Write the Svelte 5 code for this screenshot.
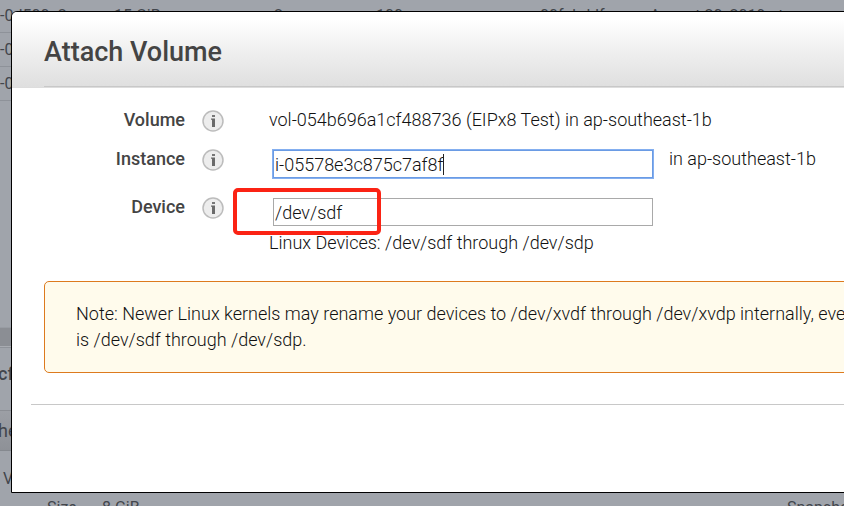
<script>
  const volume = "vol-054b696a1cf488736 (EIPx8 Test) in ap-southeast-1b";
  const zone = "in ap-southeast-1b";

  let instance = "i-05578e3c875c7af8f";
  let device = "/dev/sdf";

  const rowIds = ["-0", "-0", "-0"];
  const columns = ["-0d500c2a", "15 GiB", "gp2", "100", "", "00fabdJf", "August 20, 2019 at"];
</script>

{#snippet info(label)}
  <button class="info" type="button" aria-label={label}>
    <svg viewBox="0 0 22 22" width="22" height="22" aria-hidden="true">
      <circle cx="11" cy="11" r="10" fill="#ededed" stroke="#bcbcbc" stroke-width="1.5" />
      <rect x="10" y="5" width="3" height="2" fill="#777" />
      <path d="M9 8.5h4V17h-3V9.7H9z" fill="#6a6a6a" />
    </svg>
  </button>
{/snippet}

<main class="page">
  <div class="volumes">
    {#each rowIds as id, i}
      <div class="volume-row">
        {#if i === 0}
          {#each columns as value}<span>{value}</span>{/each}
        {:else}
          <span>{id}</span>
        {/if}
      </div>
    {/each}
  </div>
  <div class="details">
    <div class="splitter"></div>
    <div class="details-title">cf</div>
    <div class="tabs">he</div>
    <div class="detail-name">V</div>
    <div class="detail-row">
      <span>Size</span>
      <span>8 GiB</span>
      <span>Snapshot</span>
    </div>
  </div>

  <div class="dialog" role="dialog" aria-labelledby="title">
    <header>
      <h1 id="title">Attach Volume</h1>
    </header>

    <form class="fields">
      <span class="label">Volume</span>
      {@render info("About volume")}
      <div class="value">{volume}</div>

      <label class="label" for="instance">Instance</label>
      {@render info("About instance")}
      <div class="value instance">
        <div class="control">
          <input id="instance" class="focused" type="text" bind:value={instance} />
          <span class="caret"></span>
        </div>
        <span>{zone}</span>
      </div>

      <label class="label" for="device">Device</label>
      {@render info("About device")}
      <div class="value">
        <div class="control">
          <input id="device" type="text" bind:value={device} />
          <span class="highlight"></span>
        </div>
        <div>Linux Devices: /dev/sdf through /dev/sdp</div>
      </div>
    </form>

    <p class="note">
      Note: Newer Linux kernels may rename your devices to /dev/xvdf through /dev/xvdp internally, even<br />
      is /dev/sdf through /dev/sdp.
    </p>
    <hr />
  </div>
</main>

<style>
  :global(body) {
    margin: 0;
  }

  .page {
    position: relative;
    height: 100vh;
    overflow: hidden;
    display: flex;
    flex-direction: column;
    background: #a0a4ab;
    color: #42464c;
    font: 16px/26px Roboto, sans-serif;
  }

  .volumes {
    flex: 1;
    min-height: 0;
  }

  .volume-row {
    box-sizing: border-box;
    height: 34px;
    padding-top: 4px;
    border-bottom: 1px solid #8e9299;
    display: grid;
    grid-template-columns: 114px 142px 120px 84px 80px 110px 1fr;
    white-space: nowrap;
  }

  .volume-row:first-child {
    height: 33px;
    padding-top: 3px;
  }

  .details {
    height: 178px;
    border-top: 1px solid #989ca3;
  }

  .splitter {
    height: 18px;
    background: #8b8e94;
    border-bottom: 1px solid #a8abb1;
  }

  .details-title {
    box-sizing: border-box;
    height: 63px;
    padding-top: 13px;
    border-top: 1px solid #8e9299;
    font-size: 18px;
    font-weight: 500;
    text-indent: -2px;
  }

  .tabs {
    box-sizing: border-box;
    height: 41px;
    padding-top: 7px;
    border-top: 1px solid #8b8e94;
    border-bottom: 1px solid #85898f;
    background: linear-gradient(#9c9fa5, #8e9197);
    font-size: 18px;
    text-indent: -2px;
  }

  .detail-name {
    height: 29px;
    padding: 15px 0 0 3px;
  }

  .detail-row {
    display: grid;
    grid-template-columns: 55px 1fr 57px;
    padding-left: 47px;
    white-space: nowrap;
  }

  .dialog {
    position: absolute;
    top: 11px;
    right: -20px;
    bottom: 13px;
    left: 11px;
    border: 1px solid #000;
    border-radius: 6px 6px 0 0;
    background: #fff;
    color: #111;
    font-size: 18px;
    font-weight: 300;
    overflow: hidden;
  }

  header {
    padding-left: 32px;
    border-bottom: 1px solid #ddd;
    background: linear-gradient(#fff 10%, #f0f0f0 50%, #dfdfdf);
  }

  h1 {
    margin: 0;
    padding: 27px 0 20px;
    border-bottom: 1px solid #c8c8c8;
    color: #444;
    font-size: 27px;
    font-weight: 500;
    line-height: 27px;
  }

  .fields {
    display: grid;
    grid-template-columns: 173px 22px 1fr;
    column-gap: 17px;
    padding-top: 19px;
    white-space: nowrap;
  }

  .label {
    color: #444;
    text-align: right;
    font-weight: 500;
  }

  .info {
    width: 22px;
    height: 22px;
    margin-top: 3px;
    padding: 0;
    border: 0;
    background: none;
  }

  .info svg {
    display: block;
  }

  .value {
    padding: 0 0 13px 28px;
  }

  .instance {
    display: flex;
    gap: 12px;
    padding-bottom: 12px;
  }

  .control {
    position: relative;
    width: 380px;
    margin: 4px;
  }

  input {
    display: block;
    box-sizing: border-box;
    width: 100%;
    height: 28px;
    padding: 1px;
    border: 1px solid #a9a9a9;
    border-radius: 0;
    color: inherit;
    font: inherit;
  }

  .focused {
    border-color: #6a9be4;
    outline: 1px solid #84aff0;
    caret-color: transparent;
  }

  .caret {
    position: absolute;
    top: 4px;
    left: 170px;
    width: 1px;
    height: 21px;
    background: #222;
  }

  .highlight {
    position: absolute;
    top: -10px;
    left: -40px;
    box-sizing: border-box;
    width: 148px;
    height: 47px;
    border: 4px solid #fb2314;
    border-radius: 5px;
    pointer-events: none;
  }

  .note {
    margin: 12px 0 31px 32px;
    padding: 19px 31px;
    border: 1px solid #dd7a1e;
    border-radius: 5px;
    background: #fffbec;
    white-space: nowrap;
  }

  hr {
    margin: 0 0 0 19px;
    border: 0;
    border-top: 1px solid #c8c8c8;
  }
</style>
